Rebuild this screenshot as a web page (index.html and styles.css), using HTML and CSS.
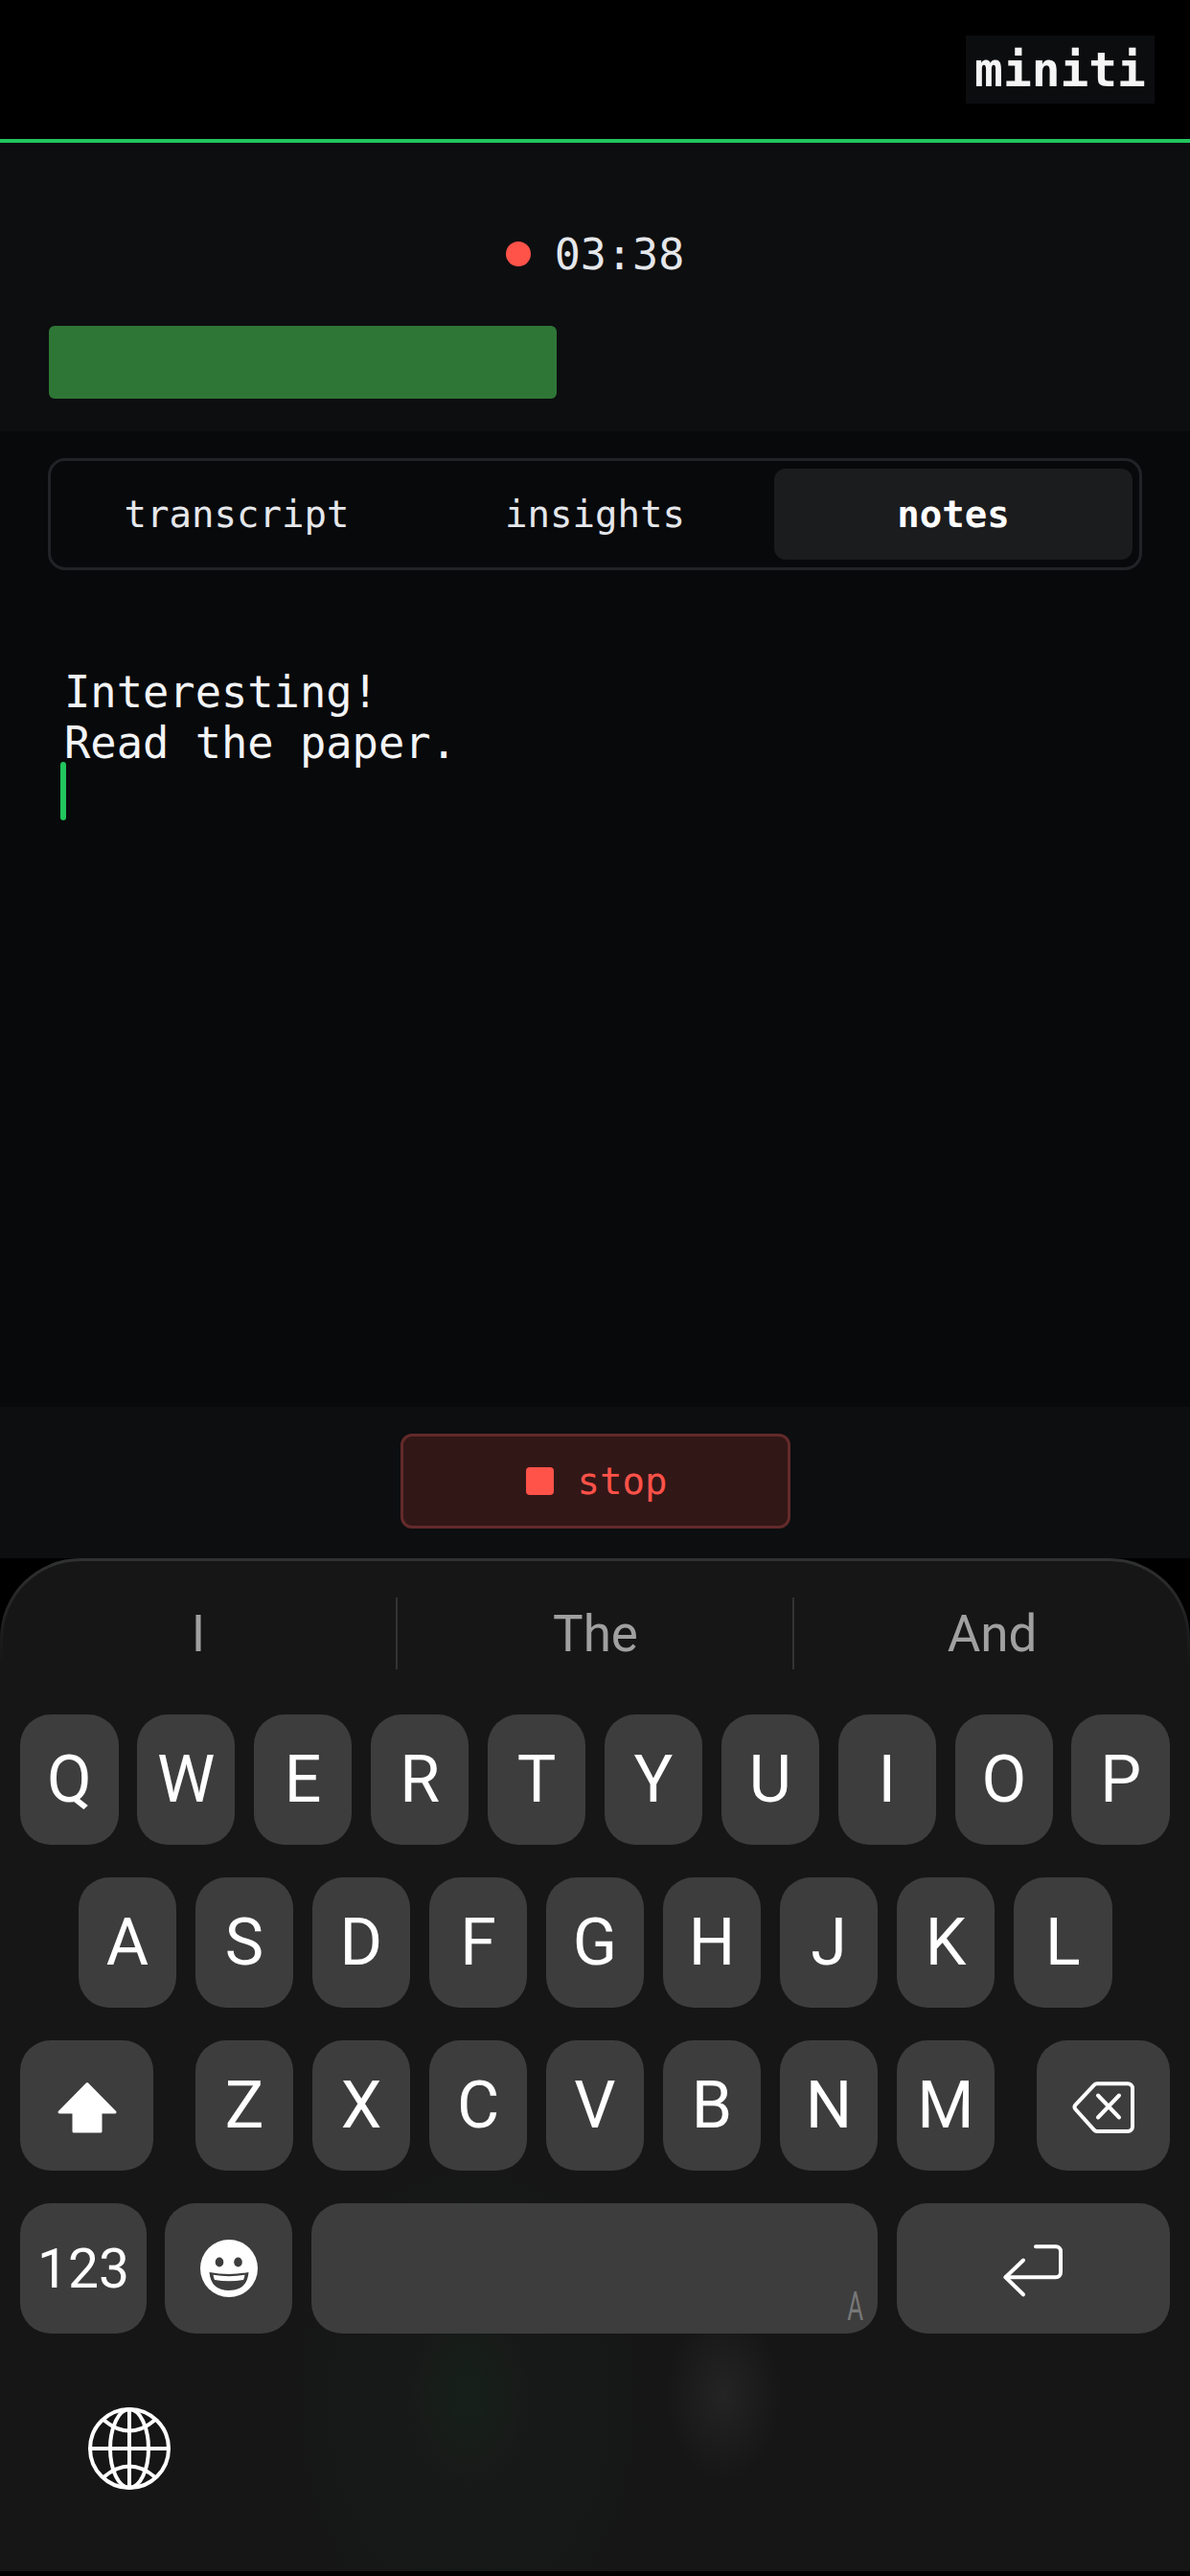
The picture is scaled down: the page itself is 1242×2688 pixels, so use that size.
FILE: index.html
```html
<!DOCTYPE html>
<html lang="en">
<head>
    <meta charset="UTF-8">
    <meta name="viewport" content="width=device-width, initial-scale=1.0">
    <title>miniti</title>
    <link rel="stylesheet" href="styles.css">
</head>
<body>
    <div class="app">
        <header class="topbar">
            <div class="logo">miniti</div>
        </header>

        <section class="session">
            <div class="timer">
                <span class="rec-dot"></span>
                <span class="time">03:38</span>
            </div>
            <div class="level-bar"></div>
        </section>

        <main class="content">
            <nav class="tabs">
                <div class="tab">transcript</div>
                <div class="tab">insights</div>
                <div class="tab active">notes</div>
            </nav>
            <div class="notes">
                <div>Interesting!</div>
                <div>Read the paper.</div>
                <span class="caret"></span>
            </div>
        </main>

        <footer class="controls">
            <button class="stop-btn"><span class="stop-icon"></span>stop</button>
        </footer>

        <!-- System keyboard -->
        <section class="keyboard">
            <div class="suggestions">
                <div class="suggestion">I</div>
                <div class="suggestion">The</div>
                <div class="suggestion">And</div>
            </div>

            <div class="rows">
                <div class="row">
                    <div class="key">Q</div><div class="key">W</div><div class="key">E</div><div class="key">R</div><div class="key">T</div>
                    <div class="key">Y</div><div class="key">U</div><div class="key">I</div><div class="key">O</div><div class="key">P</div>
                </div>
                <div class="row row-home">
                    <div class="key">A</div><div class="key">S</div><div class="key">D</div><div class="key">F</div><div class="key">G</div>
                    <div class="key">H</div><div class="key">J</div><div class="key">K</div><div class="key">L</div>
                </div>
                <div class="row row-shift">
                    <div class="key key-mod">
                        <svg width="64" height="56" viewBox="0 0 64 56"><path d="M32 3.5 L3 33 H18 V53 H46 V33 H61 Z" fill="#fff" stroke="#fff" stroke-width="3" stroke-linejoin="round"/></svg>
                    </div>
                    <div class="letters">
                        <div class="key">Z</div><div class="key">X</div><div class="key">C</div><div class="key">V</div>
                        <div class="key">B</div><div class="key">N</div><div class="key">M</div>
                    </div>
                    <div class="key key-mod">
                        <svg width="66" height="56" viewBox="0 0 66 56" fill="none" stroke="#fff" stroke-width="4" stroke-linecap="round" stroke-linejoin="round">
                            <path d="M26 3.3 H58 a5 5 0 0 1 5 5 V48 a5 5 0 0 1 -5 5 H26 a4 4 0 0 1 -3 -1.3 L3.5 30 a3.5 3.5 0 0 1 0 -4.6 L23 4.6 a4 4 0 0 1 3 -1.3 Z"/>
                            <path d="M27 15.5 L49 38.5 M49 15.5 L27 38.5"/>
                        </svg>
                    </div>
                </div>
                <div class="row row-bottom">
                    <div class="key key-num">123</div>
                    <div class="key key-emoji">
                        <svg width="62" height="62" viewBox="0 0 62 62">
                            <circle cx="31" cy="31" r="30" fill="#fff"/>
                            <ellipse cx="21" cy="24.5" rx="4.3" ry="5" fill="#3d3d3d"/>
                            <ellipse cx="40.5" cy="24.5" rx="4.3" ry="5" fill="#3d3d3d"/>
                            <path d="M10.5 35 Q31 39 51.5 35 Q50 54 31 54 Q12 54 10.5 35 Z" fill="#3d3d3d"/>
                            <path d="M14.5 37.8 Q31 40.5 47.5 37.8 Q47 41.5 46 43 Q31 45.5 16 43 Q15 41 14.5 37.8 Z" fill="#fff"/>
                        </svg>
                    </div>
                    <div class="key key-space"><span class="space-mark">A</span></div>
                    <div class="key key-return">
                        <svg width="64" height="57" viewBox="0 0 64 57" fill="none" stroke="#fff" stroke-width="4" stroke-linecap="round" stroke-linejoin="round">
                            <path d="M35 3.3 H56 a5 5 0 0 1 5 5 V30.3 a5 5 0 0 1 -5 5 H3.5"/>
                            <path d="M22 17.5 L3.5 35.3 L22 53.3"/>
                        </svg>
                    </div>
                </div>
            </div>

            <div class="globe">
                <svg width="88" height="88" viewBox="-44 -44 88 88" fill="none" stroke="#fff" stroke-width="4">
                    <circle r="41"/>
                    <ellipse rx="20" ry="41"/>
                    <path d="M0 -41 V41 M-41 0 H41"/>
                    <path d="M-27 -30 Q0 -7 27 -30 M-27 30 Q0 7 27 30"/>
                </svg>
            </div>
        </section>
    </div>
</body>
</html>
```

FILE: styles.css
```css
html, body {
    margin: 0;
    padding: 0;
    background-color: #000;
}

.app {
    width: 1242px;
    height: 2688px;
    display: flex;
    flex-direction: column;
    background-color: #000;
    font-family: "DejaVu Sans Mono", "Liberation Mono", monospace;
    overflow: hidden;
}

.topbar {
    height: 149px;
    box-sizing: border-box;
    flex: none;
    display: flex;
    justify-content: flex-end;
    padding: 37px 37px 0 0;
    border-bottom: 4px solid #22c55e;
}

.logo {
    width: 197px;
    height: 71px;
    display: flex;
    align-items: center;
    justify-content: center;
    background-color: #0c0d0f;
    color: #f5f5f5;
    font-size: 49.5px;
    font-weight: bold;
}

.session {
    flex: none;
    height: 301px;
    box-sizing: border-box;
    padding: 89px 51px 0;
    background-color: #0d0e10;
}

.timer {
    height: 54px;
    display: flex;
    align-items: center;
    justify-content: center;
    gap: 25px;
}

.rec-dot {
    width: 26px;
    height: 26px;
    border-radius: 50%;
    background-color: #ff5249;
}

.time {
    color: #e5e7eb;
    font-size: 45px;
}

.level-bar {
    width: 530px;
    height: 76px;
    margin-top: 48px;
    border-radius: 6px;
    background-color: #2e7636;
}

.content {
    flex: 1;
    background-color: #08090b;
    padding-top: 28px;
}

.tabs {
    height: 117px;
    box-sizing: border-box;
    margin: 0 50px;
    padding: 8px 7px;
    display: grid;
    grid-template-columns: repeat(3, 1fr);
    border: 3px solid #222326;
    border-radius: 18px;
}

.tab {
    display: flex;
    align-items: center;
    justify-content: center;
    color: #e5e7eb;
    font-size: 39px;
    border-radius: 12px;
}

.tab.active {
    background-color: #1b1c1e;
    color: #fff;
    font-weight: bold;
}

.notes {
    padding: 101px 0 0 67px;
    color: #f3f4f6;
    font-size: 45.4px;
    line-height: 53px;
}

.caret {
    display: block;
    width: 6px;
    height: 61px;
    margin: -7px 0 0 -4px;
    border-radius: 3px;
    background-color: #22c55e;
}

.controls {
    flex: none;
    height: 158px;
    box-sizing: border-box;
    padding-top: 28px;
    display: flex;
    justify-content: center;
    background-color: #0d0e10;
}

.stop-btn {
    width: 407px;
    height: 99px;
    display: flex;
    align-items: center;
    justify-content: center;
    gap: 25px;
    padding: 0 0 0 3px;
    border: 3px solid #632a2a;
    border-radius: 12px;
    background-color: #321717;
    color: #ff5249;
    font-family: inherit;
    font-size: 39px;
    font-weight: 500;
}

.stop-icon {
    width: 29px;
    height: 29px;
    border-radius: 4px;
    background-color: #ff5249;
}

.keyboard {
    flex: none;
    height: 1057px;
    margin-bottom: 5px;
    box-sizing: border-box;
    border: 3px solid transparent;
    border-bottom: 0;
    border-radius: 84px 84px 0 0;
    background:
        radial-gradient(ellipse 60px 90px at 752px 869px, #242424, rgba(36,36,36,0)) padding-box,
        radial-gradient(ellipse 60px 90px at 486px 869px, #16201a, rgba(22,32,26,0)) padding-box,
        radial-gradient(ellipse 200px 280px at 486px 880px, #181b19, rgba(24,27,25,0)) padding-box,
        linear-gradient(#161617, #161617) padding-box,
        linear-gradient(#303132, #161617 110px) border-box;
    font-family: Roboto, "Noto Sans", sans-serif;
    color: #fff;
}

.suggestions {
    display: grid;
    grid-template-columns: repeat(3, 1fr);
    margin: 38px -3px 0;
    height: 75px;
}

.suggestion {
    display: flex;
    align-items: center;
    justify-content: center;
    color: #a0a0a0;
    font-size: 53px;
}

.suggestion + .suggestion {
    border-left: 2px solid #333;
    margin-left: -1px;
}

.rows {
    display: flex;
    flex-direction: column;
    gap: 34px;
    margin: 47px -3px 0;
}

.row {
    height: 136px;
    display: flex;
    gap: 19.4px;
    padding: 0 21px;
}

.row-home {
    padding: 0 81.5px;
}

.row-shift {
    justify-content: space-between;
    gap: 0;
}

.letters {
    display: flex;
    gap: 19.4px;
}

.letters .key {
    flex: none;
    width: 102.6px;
}

.key {
    flex: 1;
    display: flex;
    align-items: center;
    justify-content: center;
    box-sizing: border-box;
    border-radius: 32px;
    background-color: #3d3d3d;
    font-size: 68px;
}

.key-mod {
    flex: none;
    width: 139px;
    padding-top: 4px;
}

.key-num {
    flex: none;
    width: 132px;
    font-size: 57px;
}

.key-emoji {
    flex: none;
    width: 133px;
}

.key-space {
    position: relative;
}

.key-return {
    flex: none;
    width: 285.5px;
    padding-top: 4px;
}

.space-mark {
    position: absolute;
    right: 15px;
    bottom: 7px;
    color: #777;
    font-size: 43px;
    line-height: 1;
    transform: scaleX(0.6);
    transform-origin: right;
}

.globe {
    margin: 76px 0 0 88px;
    height: 88px;
}
```
